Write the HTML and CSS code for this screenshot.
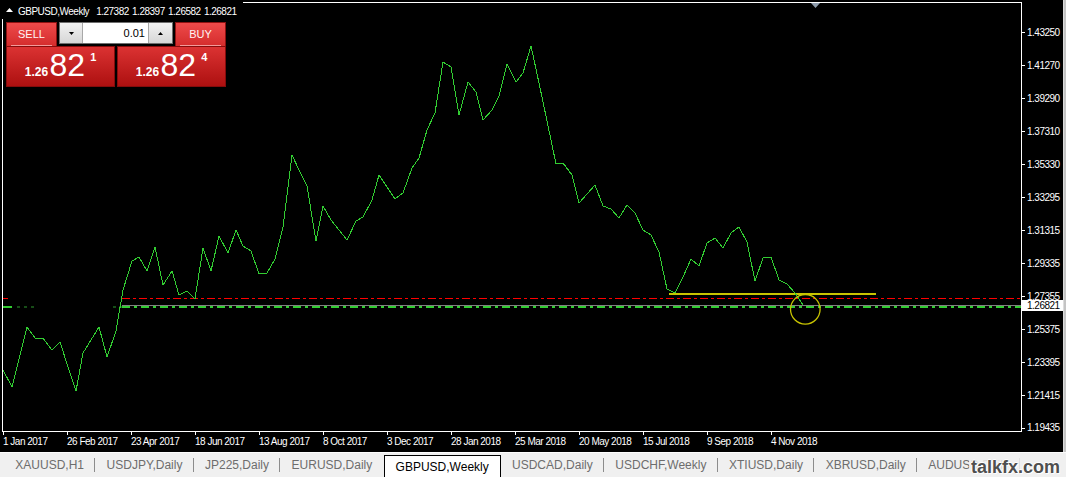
FILE: index.html
```html
<!DOCTYPE html>
<html>
<head>
<meta charset="utf-8">
<title>GBPUSD,Weekly</title>
<link rel="stylesheet" href="styles.css">
</head>
<body>
<div class="terminal">
  <div class="window">
    <div class="chart">
      <svg class="plot" width="1063" height="452" viewBox="0 0 1063 452">
        <rect x="2.5" y="2.5" width="1019" height="428.5" fill="none" stroke="#ffffff" stroke-width="1" shape-rendering="crispEdges"/>
        <polygon points="811,3 820,3 815.5,8" fill="#8d9bab"/>

        <!-- level lines -->
        <g shape-rendering="crispEdges">
          <line x1="3" y1="298.5" x2="8" y2="298.5" stroke="#ff0000"/>
          <line x1="122" y1="298.5" x2="1021" y2="298.5" stroke="#ff0000" stroke-dasharray="8 3 3 3"/>
          <line x1="122" y1="305.5" x2="1021" y2="305.5" stroke="#808080"/>
          <line x1="3" y1="307" x2="12" y2="307" stroke="#32cd32" stroke-width="2"/>
          <line x1="17" y1="307" x2="37" y2="307" stroke="#174d17" stroke-width="2" stroke-dasharray="3 4"/>
          <line x1="113" y1="307" x2="122" y2="307" stroke="#174d17" stroke-width="2" stroke-dasharray="3 3"/>
          <line x1="122" y1="307" x2="1021" y2="307" stroke="#32cd32" stroke-width="2" stroke-dasharray="8 4 3 4"/>
          <line x1="669" y1="294" x2="876" y2="294" stroke="#c8c400" stroke-width="2"/>
        </g>

        <!-- price line -->
        <polyline fill="none" stroke="#32cd32" stroke-width="1" shape-rendering="crispEdges"
          points="3,370 12,387 27,327 36,339 43,338 52,350 60,342 68,367 76,391 83,353 91,340 99,327 107,357 116,331 123,290 132,261 139,257 147,271 155,247 163,285 172,271 179,295 187,291 195,299 203,248 211,271 219,236 228,253 236,230 243,246 251,251 259,274 267,273 275,259 283,227 292,155 300,172 307,186 316,241 323,206 331,220 339,230 347,240 356,221 363,217 372,200 379,175 387,187 395,199 403,193 412,168 419,158 427,130 435,113 443,62 451,67 459,115 468,82 476,92 483,120 492,110 499,96 507,64 516,82 523,73 531,46 539,83 547,121 556,164 563,163 572,175 579,203 587,194 595,185 603,206 611,209 619,218 627,205 635,213 643,230 651,235 659,252 667,289 675,293 683,277 691,259 699,266 707,243 715,238 723,248 731,233 739,227 747,242 755,281 763,258 771,257 779,280 787,284 795,293 803,305"/>

        <circle cx="805.3" cy="309.3" r="14.8" fill="none" stroke="#c8c400" stroke-width="1.3"/>

        <!-- price axis -->
        <g stroke="#ffffff" shape-rendering="crispEdges">
          <line x1="1021" y1="32.5" x2="1025" y2="32.5"/>
          <line x1="1021" y1="65.5" x2="1025" y2="65.5"/>
          <line x1="1021" y1="98.5" x2="1025" y2="98.5"/>
          <line x1="1021" y1="131.5" x2="1025" y2="131.5"/>
          <line x1="1021" y1="164.5" x2="1025" y2="164.5"/>
          <line x1="1021" y1="197.5" x2="1025" y2="197.5"/>
          <line x1="1021" y1="230.5" x2="1025" y2="230.5"/>
          <line x1="1021" y1="263.5" x2="1025" y2="263.5"/>
          <line x1="1021" y1="296.5" x2="1025" y2="296.5"/>
          <line x1="1021" y1="329.5" x2="1025" y2="329.5"/>
          <line x1="1021" y1="362.5" x2="1025" y2="362.5"/>
          <line x1="1021" y1="395.5" x2="1025" y2="395.5"/>
          <line x1="1021" y1="428.5" x2="1025" y2="428.5"/>
        </g>
        <g class="axis-y">
          <text x="1027" y="35.5">1.43250</text>
          <text x="1027" y="68.5">1.41270</text>
          <text x="1027" y="101.5">1.39290</text>
          <text x="1027" y="134.5">1.37310</text>
          <text x="1027" y="167.5">1.35330</text>
          <text x="1027" y="200.5">1.33295</text>
          <text x="1027" y="233.5">1.31315</text>
          <text x="1027" y="266.5">1.29335</text>
          <text x="1027" y="299.5">1.27355</text>
          <text x="1027" y="332.5">1.25375</text>
          <text x="1027" y="365.5">1.23395</text>
          <text x="1027" y="398.5">1.21415</text>
          <text x="1027" y="431">1.19435</text>
        </g>
        <rect x="1022" y="300" width="41" height="11" fill="#ffffff"/>
        <text class="cur" x="1027" y="309.3">1.26821</text>

        <!-- time axis -->
        <g stroke="#ffffff" shape-rendering="crispEdges">
          <line x1="3.5" y1="431" x2="3.5" y2="435"/>
          <line x1="67.5" y1="431" x2="67.5" y2="435"/>
          <line x1="131.5" y1="431" x2="131.5" y2="435"/>
          <line x1="195.5" y1="431" x2="195.5" y2="435"/>
          <line x1="259.5" y1="431" x2="259.5" y2="435"/>
          <line x1="323.5" y1="431" x2="323.5" y2="435"/>
          <line x1="387.5" y1="431" x2="387.5" y2="435"/>
          <line x1="451.5" y1="431" x2="451.5" y2="435"/>
          <line x1="515.5" y1="431" x2="515.5" y2="435"/>
          <line x1="579.5" y1="431" x2="579.5" y2="435"/>
          <line x1="643.5" y1="431" x2="643.5" y2="435"/>
          <line x1="707.5" y1="431" x2="707.5" y2="435"/>
          <line x1="771.5" y1="431" x2="771.5" y2="435"/>
        </g>
        <g class="axis-x">
          <text x="3" y="444.5">1 Jan 2017</text>
          <text x="67" y="444.5">26 Feb 2017</text>
          <text x="131" y="444.5">23 Apr 2017</text>
          <text x="195" y="444.5">18 Jun 2017</text>
          <text x="259" y="444.5">13 Aug 2017</text>
          <text x="323" y="444.5">8 Oct 2017</text>
          <text x="387" y="444.5">3 Dec 2017</text>
          <text x="451" y="444.5">28 Jan 2018</text>
          <text x="515" y="444.5">25 Mar 2018</text>
          <text x="579" y="444.5">20 May 2018</text>
          <text x="643" y="444.5">15 Jul 2018</text>
          <text x="707" y="444.5">9 Sep 2018</text>
          <text x="771" y="444.5">4 Nov 2018</text>
        </g>
      </svg>

      <div class="header">
        <svg class="hdr-tri" width="7" height="4" viewBox="0 0 7 4"><polygon points="0,4 7,4 3.5,0" fill="#ffffff"/></svg>
        <span class="sym">GBPUSD,Weekly</span>
        <span class="ohlc">1.27382 1.28397 1.26582 1.26821</span>
      </div>

      <div class="trade">
        <div class="btn btn-sell"><span class="btn-label">SELL</span></div>
        <div class="spinner">
          <div class="spin-btn spin-down">
            <svg width="5" height="3" viewBox="0 0 5 3"><polygon points="0,0 5,0 2.5,3" fill="#000"/></svg>
          </div>
          <div class="lot">0.01</div>
          <div class="spin-btn spin-up">
            <svg width="5" height="3" viewBox="0 0 5 3"><polygon points="0,3 5,3 2.5,0" fill="#000"/></svg>
          </div>
        </div>
        <div class="btn btn-buy"><span class="btn-label">BUY</span></div>
        <div class="quote quote-sell"><span class="q-small">1.26</span><span class="q-big">82</span><span class="q-sup">1</span></div>
        <div class="quote quote-buy"><span class="q-small">1.26</span><span class="q-big">82</span><span class="q-sup">4</span></div>
      </div>
    </div>
    <div class="edge"></div>
  </div>

  <div class="tabs">
    <div class="tab sep">XAUUSD,H1</div>
    <div class="tab sep">USDJPY,Daily</div>
    <div class="tab sep">JP225,Daily</div>
    <div class="tab">EURUSD,Daily</div>
    <div class="tab active">GBPUSD,Weekly</div>
    <div class="tab sep">USDCAD,Daily</div>
    <div class="tab sep">USDCHF,Weekly</div>
    <div class="tab sep">XTIUSD,Daily</div>
    <div class="tab sep">XBRUSD,Daily</div>
    <div class="tab sep">AUDUSD,Daily</div>
    <div class="watermark">talkfx.com</div>
  </div>
</div>
</body>
</html>
```

FILE: styles.css
```css
* {
  box-sizing: border-box;
}

html,
body {
  margin: 0;
  padding: 0;
}

body {
  width: 1066px;
  height: 477px;
  overflow: hidden;
  background: #f0f0f0;
  font-family: "Liberation Sans", Arial, sans-serif;
}

.terminal {
  display: flex;
  flex-direction: column;
  width: 1066px;
  height: 477px;
}

.window {
  display: flex;
  flex: none;
  height: 452px;
}

.chart {
  position: relative;
  flex: none;
  width: 1063px;
  height: 452px;
  background: #000;
}

.edge {
  flex: 1;
  background: #c4c4c4;
  border-left: 1px solid #dcdcdc;
}

.plot {
  display: block;
}

.plot text {
  font-family: "Liberation Sans", Arial, sans-serif;
  font-size: 10px;
  letter-spacing: -0.5px;
  fill: #ffffff;
}

.plot text.cur {
  fill: #000000;
}

/* header label */
.header {
  position: absolute;
  left: 0;
  top: 0;
  height: 19px;
  padding: 3px 6px 0 6px;
  display: flex;
  align-items: flex-start;
  background: #000;
  color: #fff;
  font-size: 10px;
  line-height: 17px;
  letter-spacing: -0.5px;
  white-space: nowrap;
}

.hdr-tri {
  display: block;
  margin-top: 5px;
  margin-right: 5px;
}

.sym {
  margin-right: 7px;
}

.ohlc {
  word-spacing: 1px;
}

/* one click trading panel */
.trade {
  position: absolute;
  left: 6px;
  top: 22px;
  display: grid;
  grid-template-columns: 51px 2px 56px 2px 56px 2px 51px;
  grid-template-rows: 24px 41px;
  color: #fff;
}

.btn {
  display: flex;
  padding: 0 4px;
  background: linear-gradient(#ee4a4a, #d42c2c);
  border: 1px solid #8e1111;
  border-bottom: none;
  font-size: 11px;
}

.btn-label {
  flex: 1;
  display: flex;
  align-items: center;
  justify-content: center;
  border-bottom: 1px solid #f39a9a;
  color: #fff4f4;
}

.btn-sell {
  grid-column: 1;
  grid-row: 1;
}

.btn-buy {
  grid-column: 7;
  grid-row: 1;
}

.spinner {
  grid-column: 3 / 6;
  grid-row: 1;
  height: 22px;
  display: flex;
  border: 1px solid #6e6e6e;
  background: #fff;
}

.spin-btn {
  display: flex;
  align-items: center;
  justify-content: center;
  background: linear-gradient(#f2f2f2, #d6d6d6);
}

.spin-btn svg {
  display: block;
}

.spin-down {
  width: 23px;
  border-right: 1px solid #a8a8a8;
}

.spin-up {
  width: 24px;
  border-left: 1px solid #a8a8a8;
}

.lot {
  flex: 1;
  display: flex;
  align-items: center;
  justify-content: flex-end;
  padding-right: 3px;
  color: #000;
  font-size: 11px;
}

.quote {
  grid-row: 2;
  display: flex;
  align-items: baseline;
  justify-content: center;
  padding-top: 2px;
  background: linear-gradient(#db3232, #ad1010);
  border: 1px solid #850c0c;
}

.quote-sell {
  grid-column: 1 / 4;
}

.quote-buy {
  grid-column: 5 / 8;
}

.q-small {
  font-size: 12px;
  line-height: 12px;
  font-weight: bold;
  margin-right: 1.5px;
}

.q-big {
  font-size: 32px;
  line-height: 32px;
}

.q-sup {
  align-self: flex-start;
  margin-top: 3px;
  margin-left: 5px;
  font-size: 11px;
  line-height: 11px;
  font-weight: bold;
}

/* symbol tabs */
.tabs {
  position: relative;
  flex: none;
  height: 25px;
  display: flex;
  padding-left: 4px;
  background: #f0f0f0;
  border-top: 1px solid #fdfdfd;
  font-size: 12px;
  color: #6d6d6d;
}

.tab {
  display: flex;
  align-items: center;
  padding: 0 11.3px;
  white-space: nowrap;
}

.tab.sep {
  background: linear-gradient(#8c8c8c, #8c8c8c) right center / 1px 14px no-repeat;
}

.tab.active {
  margin-top: 2px;
  padding: 0 11px;
  background: #fff;
  color: #000;
  border: 1px solid #000;
  border-bottom: none;
}

.watermark {
  position: absolute;
  right: 6px;
  top: 5px;
  padding-left: 2px;
  font-size: 18px;
  line-height: 18px;
  font-weight: bold;
  color: #4f4f4f;
  background: rgba(240, 240, 240, 0.85);
  text-shadow: 1px 1px 0 #ffffff, -1px 0 0 #ffffff, 0 -1px 0 #ffffff;
}
```
